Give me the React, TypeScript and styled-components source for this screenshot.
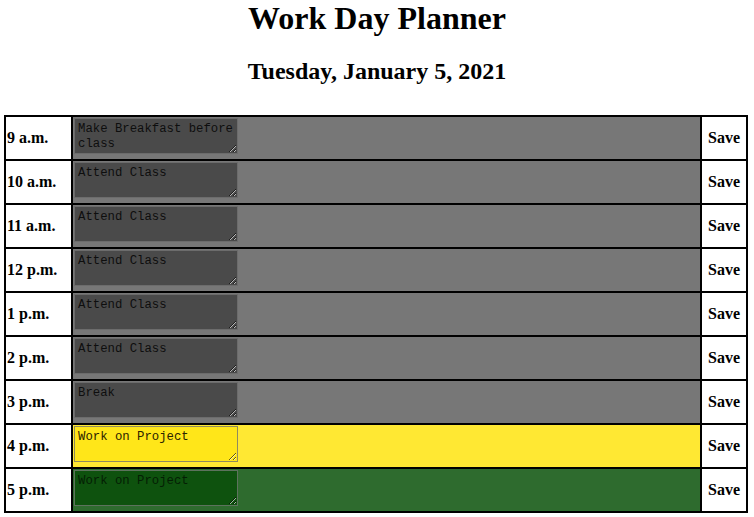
import React from "react";
import styled, { createGlobalStyle } from "styled-components";

const Global = createGlobalStyle`
  html, body { margin: 0; padding: 0; background: #ffffff; }
  body { font-family: "Liberation Serif", "Times New Roman", serif; color: #000; }
`;

type Tense = "past" | "present" | "future";

const palette: Record<Tense, { row: string; area: string; border: string; text: string }> = {
  past: { row: "#777777", area: "#4a4a4a", border: "#6c6c6c", text: "#0e0e0e" },
  present: { row: "#ffe833", area: "#ffe619", border: "#8f8b5e", text: "#2a2200" },
  future: { row: "#2e6b2e", area: "#0e520e", border: "#5d725d", text: "#041e04" },
};

const Page = styled.div`
  padding: 0 4px;
`;

const Title = styled.h1`
  margin: 0;
  text-align: center;
  font-size: 32px;
  font-weight: bold;
  line-height: 37px;
`;

const DateLine = styled.h2`
  margin: 20px 0 0;
  text-align: center;
  font-size: 24px;
  font-weight: bold;
  line-height: 28px;
`;

const Planner = styled.table`
  margin-top: 30px;
  width: 744px;
  border-collapse: collapse;
  table-layout: fixed;
`;

const Row = styled.tr<{ $tense: Tense }>`
  height: 44px;
  & > td.slot {
    background: ${(p) => palette[p.$tense].row};
  }
`;

const Cell = styled.td`
  border: 2px solid #000;
  padding: 0;
`;

const HourCell = styled(Cell)`
  width: 64px;
  font-size: 16px;
  font-weight: bold;
  padding-left: 1px;
  vertical-align: middle;
  background: #fff;
`;

const SlotCell = styled(Cell)`
  vertical-align: top;
  padding: 1px 0 0 1px;
`;

const Note = styled.textarea<{ $tense: Tense }>`
  display: block;
  box-sizing: border-box;
  width: 164px;
  height: 36px;
  margin: 0;
  padding: 3px 3px 2px;
  resize: both;
  font-family: "Liberation Mono", "DejaVu Sans Mono", monospace;
  font-size: 12.3px;
  line-height: 15px;
  background: ${(p) => palette[p.$tense].area};
  border: 1px solid ${(p) => palette[p.$tense].border};
  color: ${(p) => palette[p.$tense].text};
  overflow: hidden;
`;

const SaveCell = styled(Cell)`
  width: 44px;
  text-align: center;
  font-size: 16px;
  font-weight: bold;
  background: #fff;
  cursor: pointer;
`;

const hours: { label: string; note: string; tense: Tense }[] = [
  { label: "9 a.m.", note: "Make Breakfast before class", tense: "past" },
  { label: "10 a.m.", note: "Attend Class", tense: "past" },
  { label: "11 a.m.", note: "Attend Class", tense: "past" },
  { label: "12 p.m.", note: "Attend Class", tense: "past" },
  { label: "1 p.m.", note: "Attend Class", tense: "past" },
  { label: "2 p.m.", note: "Attend Class", tense: "past" },
  { label: "3 p.m.", note: "Break", tense: "past" },
  { label: "4 p.m.", note: "Work on Project", tense: "present" },
  { label: "5 p.m.", note: "Work on Project", tense: "future" },
];

export default function App() {
  return (
    <>
      <Global />
      <Page>
        <Title>Work Day Planner</Title>
        <DateLine>Tuesday, January 5, 2021</DateLine>
        <Planner>
          <tbody>
            {hours.map((h) => (
              <Row key={h.label} $tense={h.tense}>
                <HourCell>{h.label}</HourCell>
                <SlotCell className="slot">
                  <Note $tense={h.tense} defaultValue={h.note} />
                </SlotCell>
                <SaveCell>Save</SaveCell>
              </Row>
            ))}
          </tbody>
        </Planner>
      </Page>
    </>
  );
}
